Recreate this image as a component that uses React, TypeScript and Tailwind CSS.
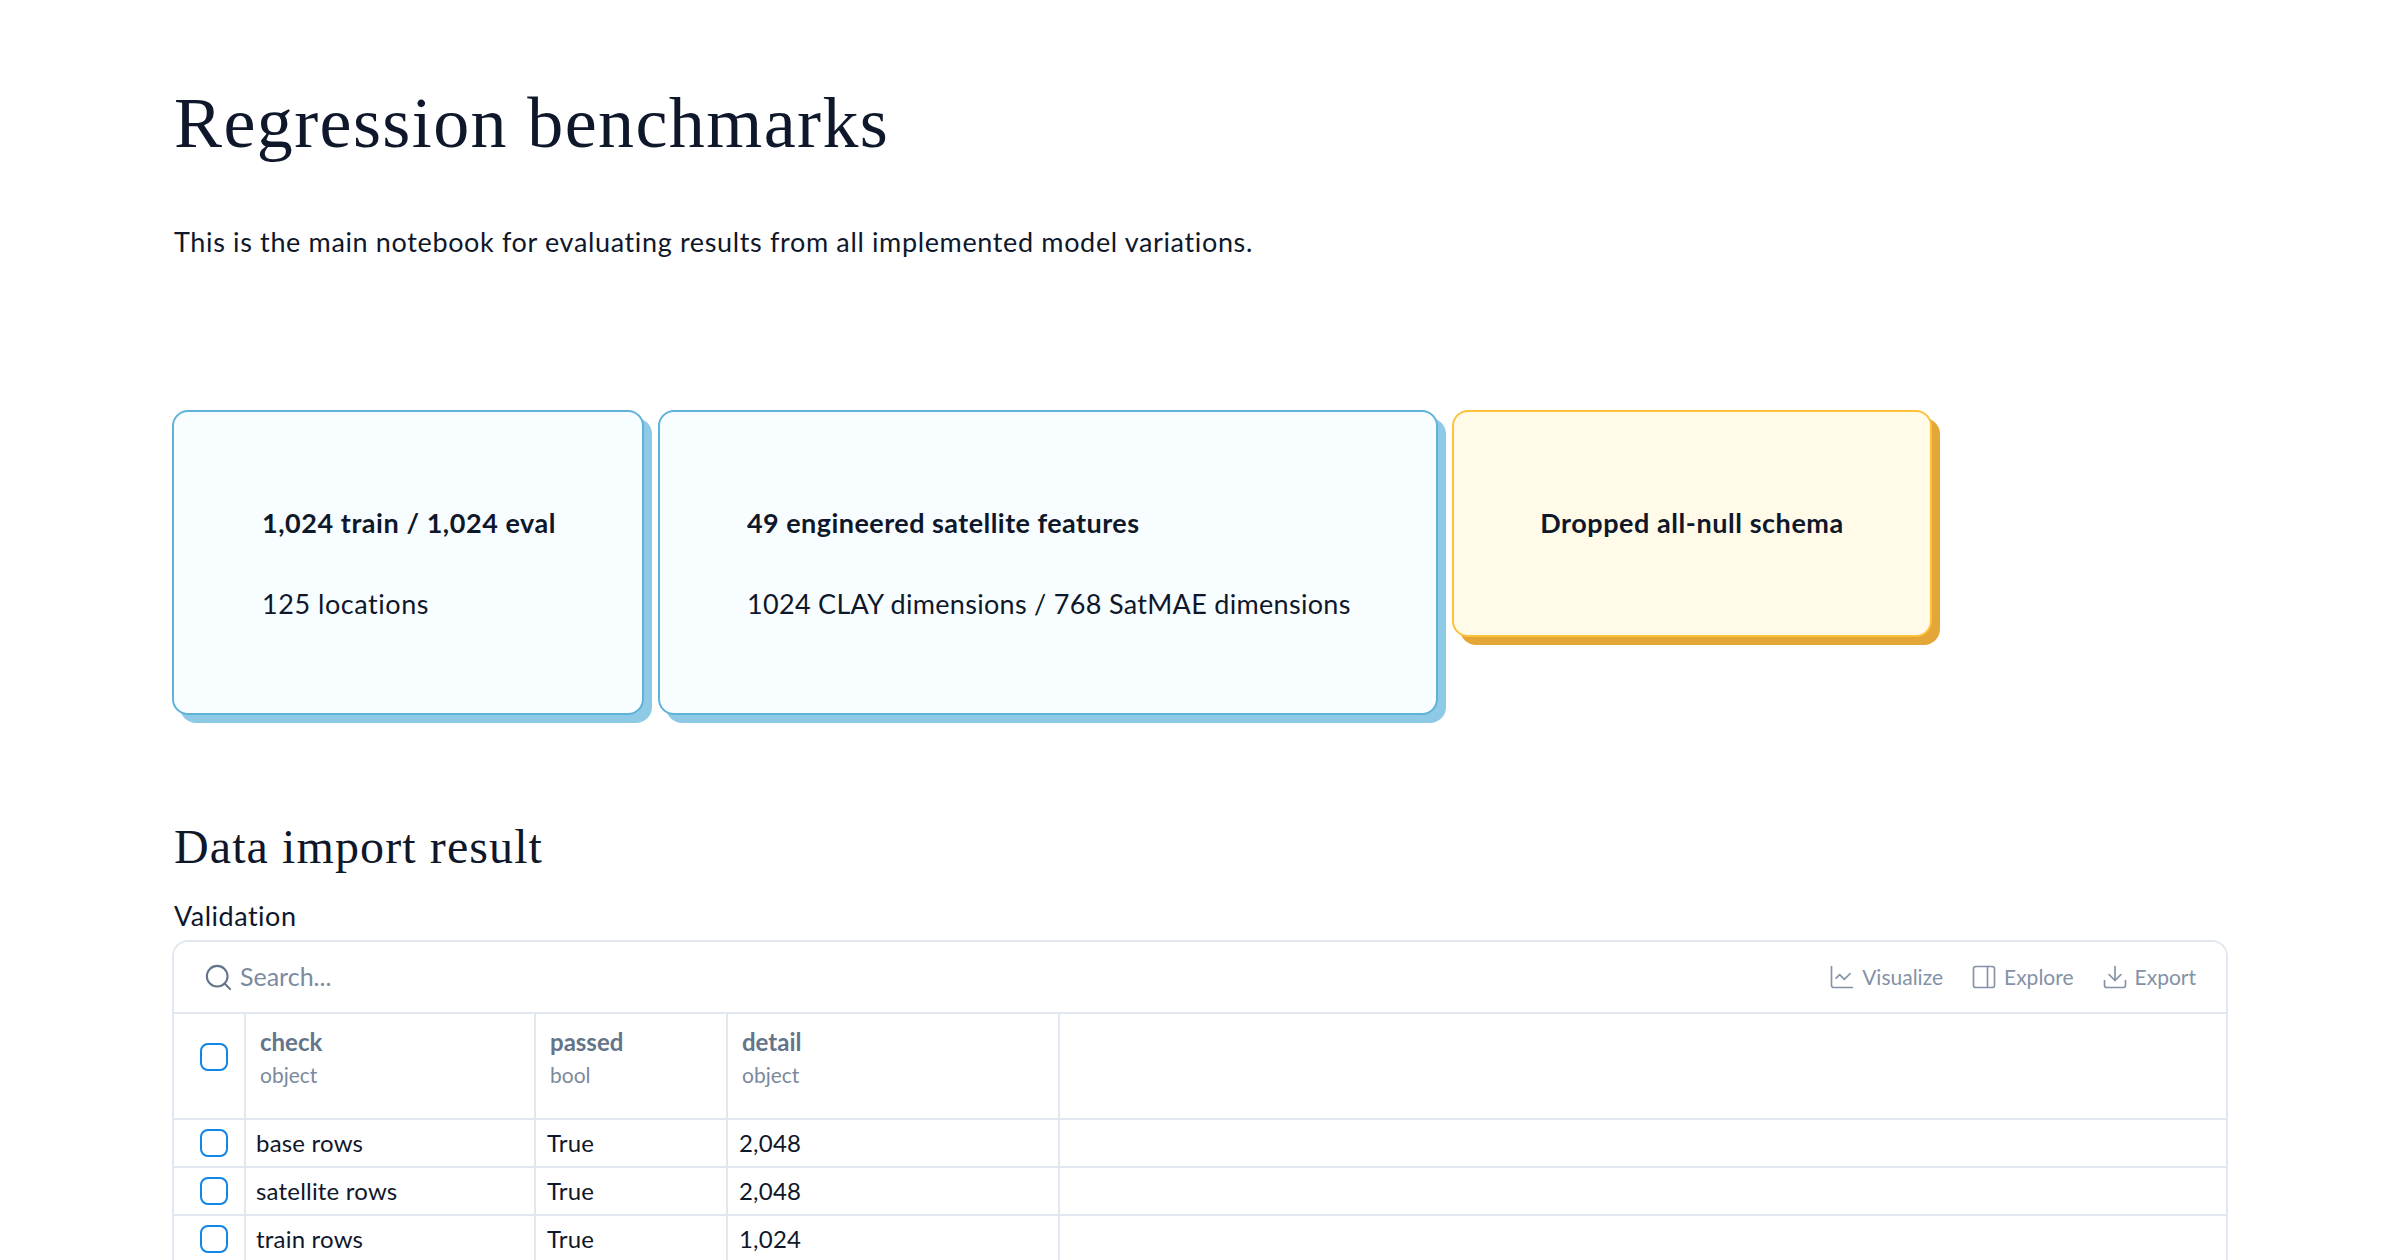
import React from 'react';
import { ChartLine, Download, PanelRight, Search } from 'lucide-react';

const gridCols = 'grid grid-cols-[72px_290px_192px_332px_1fr] border-b-2 border-[#e2e8f0]';
const cell = 'border-r-2 border-[#e2e8f0]';

const Checkbox = () => (
  <div className="w-[28px] h-[28px] rounded-[8px] border-2 border-[#0f86e8] bg-white" />
);

const Callout = ({ tone, className, children }: { tone: 'blue' | 'yellow'; className: string; children: React.ReactNode }) => (
  <div
    className={
      tone === 'blue'
        ? `rounded-[16px] border-2 border-[#5fb2d8] bg-[#f8feff] shadow-[8px_8px_0_0_#8ecae6] whitespace-nowrap ${className}`
        : `rounded-[16px] border-2 border-[#fdc13c] bg-[#fffbe8] shadow-[8px_8px_0_0_#e4a636] whitespace-nowrap ${className}`
    }
  >
    {children}
  </div>
);

const rows = [
  ['base rows', 'True', '2,048'],
  ['satellite rows', 'True', '2,048'],
  ['train rows', 'True', '1,024'],
];

const columns = [
  ['check', 'object'],
  ['passed', 'bool'],
  ['detail', 'object'],
];

export default function App() {
  return (
    <div className="h-screen overflow-hidden bg-white pl-[172px] pr-[172px] text-[#0f172a] font-['Lato','Liberation_Sans',sans-serif]">
      <h1 className="pt-[83px] text-[72px] leading-[80px] tracking-[1.4px] font-normal font-['Liberation_Serif',serif] pl-[2px]">
        Regression benchmarks
      </h1>
      <p className="mt-[59px] pl-[2px] text-[27px] leading-[40px] tracking-[0.64px]">
        This is the main notebook for evaluating results from all implemented model variations.
      </p>

      <div className="mt-[148px] flex items-start gap-[14px] text-[27px] leading-[40px] tracking-[0.55px]">
        <Callout tone="blue" className="w-[472px] h-[305px] px-[88px] pt-[91px]">
          <p className="font-bold">1,024 train / 1,024 eval</p>
          <p className="mt-[41px]">125 locations</p>
        </Callout>
        <Callout tone="blue" className="w-[780px] h-[305px] px-[87px] pt-[91px]">
          <p className="font-bold tracking-[0.45px]">49 engineered satellite features</p>
          <p className="mt-[41px] tracking-[0.3px]">1024 CLAY dimensions / 768 SatMAE dimensions</p>
        </Callout>
        <Callout tone="yellow" className="w-[480px] h-[227px] pt-[91px] text-center">
          <p className="font-bold">Dropped all-null schema</p>
        </Callout>
      </div>

      <h2 className="mt-[102px] pl-[2px] text-[48px] leading-[60px] tracking-[1.1px] font-normal font-['Liberation_Serif',serif]">
        Data import result
      </h2>
      <p className="mt-[21px] pl-[2px] text-[27px] leading-[36px] tracking-[0.5px]">Validation</p>

      <div className="mt-[6px] rounded-t-[16px] border-2 border-b-0 border-[#e2e8f0] w-[2056px]">
        <div className="h-[72px] flex items-center justify-between pl-[29px] pr-[30px] border-b-2 border-[#e2e8f0]">
          <div className="flex items-center gap-[6px] text-[25px] text-[#7c8a9e]">
            <Search className="w-[31px] h-[31px] text-[#64748b]" strokeWidth={1.6} />
            <span>Search...</span>
          </div>
          <div className="flex items-center gap-[27px] text-[21px] text-[#8492a6]">
            <span className="flex items-center gap-[6px]">
              <ChartLine className="w-[28px] h-[28px]" strokeWidth={1.4} />
              Visualize
            </span>
            <span className="flex items-center gap-[6px]">
              <PanelRight className="w-[28px] h-[28px]" strokeWidth={1.4} />
              Explore
            </span>
            <span className="flex items-center gap-[6px]">
              <Download className="w-[28px] h-[28px]" strokeWidth={1.4} />
              Export
            </span>
          </div>
        </div>

        <div className={`${gridCols} h-[106px]`}>
          <div className={`${cell} flex justify-center items-center pl-[10px] pb-[18px]`}>
            <Checkbox />
          </div>
          {columns.map(([name, type]) => (
            <div key={name} className={`${cell} pl-[14px] pt-[13px]`}>
              <div className="text-[24px] leading-[30px] font-bold text-[#64748b]">{name}</div>
              <div className="mt-[4px] text-[21px] leading-[28px] text-[#7c8a9e]">{type}</div>
            </div>
          ))}
          <div />
        </div>

        {rows.map(([check, passed, detail]) => (
          <div key={check} className={`${gridCols} h-[48px] text-[24px] leading-[46px] tracking-[0.2px]`}>
            <div className={`${cell} flex justify-center items-center pl-[10px]`}>
              <Checkbox />
            </div>
            <div className={`${cell} pl-[10px]`}>{check}</div>
            <div className={`${cell} pl-[11px]`}>{passed}</div>
            <div className={`${cell} pl-[11px]`}>{detail}</div>
            <div />
          </div>
        ))}
      </div>
    </div>
  );
}
